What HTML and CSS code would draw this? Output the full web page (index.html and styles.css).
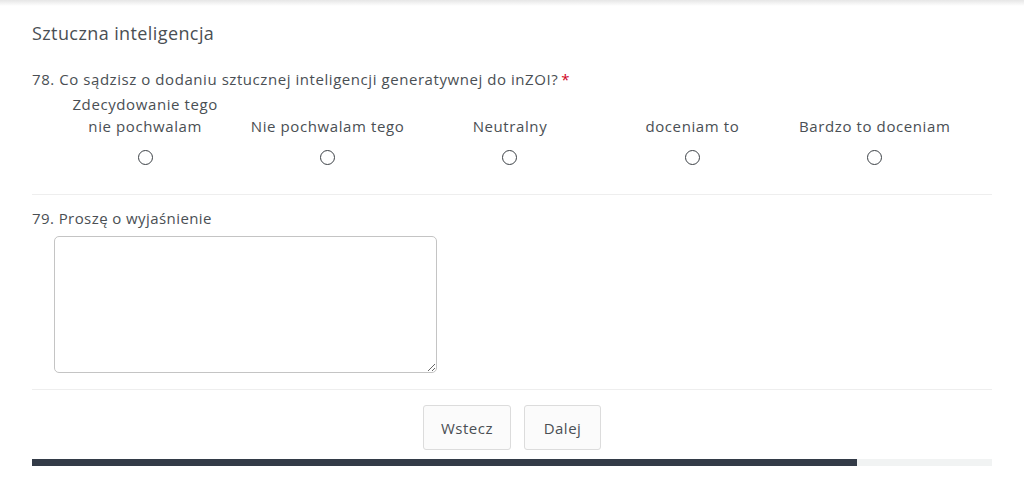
FILE: index.html
```html
<!DOCTYPE html>
<html lang="pl">
<head>
<meta charset="utf-8">
<link rel="stylesheet" href="styles.css">
</head>
<body>
<div class="topshade"></div>
<div class="page">
  <h2 class="section-title">Sztuczna inteligencja</h2>
  <div class="question q78">
    <div class="q-title q78-title">78. Co sądzisz o dodaniu sztucznej inteligencji generatywnej do inZOI?<span class="req">*</span></div>
    <div class="scale">
      <label class="opt"><span class="opt-label">Zdecydowanie tego<br>nie pochwalam</span><span class="radio"></span></label>
      <label class="opt"><span class="opt-label">Nie pochwalam tego</span><span class="radio"></span></label>
      <label class="opt"><span class="opt-label">Neutralny</span><span class="radio"></span></label>
      <label class="opt"><span class="opt-label">doceniam to</span><span class="radio"></span></label>
      <label class="opt"><span class="opt-label">Bardzo to doceniam</span><span class="radio"></span></label>
    </div>
  </div>
  <div class="question q79">
    <div class="q-title">79. Proszę o wyjaśnienie</div>
    <textarea class="answer"></textarea>
  </div>
  <div class="nav">
    <button class="btn btn-back">Wstecz</button>
    <button class="btn btn-next">Dalej</button>
  </div>
  <div class="progress"><div class="progress-fill" style="width: 85.9%"></div></div>
</div>
</body>
</html>
```
FILE: styles.css
```css
html, body {
  margin: 0;
  padding: 0;
  background: #ffffff;
}
body {
  font-family: "Open Sans", "DejaVu Sans", sans-serif;
  color: #4a4f54;
  width: 1024px;
  height: 485px;
  overflow: hidden;
}
.topshade {
  height: 6px;
  background: linear-gradient(#e6e6e6, #ffffff);
}
.page {
  margin: 0 32px;
}
.section-title {
  margin: 14px 0 0;
  font-size: 18px;
  font-weight: 400;
  line-height: 26px;
  letter-spacing: 0.4px;
  color: #4a4f54;
}
.question {
  border-bottom: 1px solid #eeeeee;
}
.q78 {
  margin-top: 23px;
  padding-bottom: 29px;
}
.q-title {
  font-size: 15px;
  line-height: 20px;
  letter-spacing: 0.42px;
}
.q78-title {
  letter-spacing: 0.56px;
}
.req {
  color: #d0021b;
  margin-left: 3px;
}
.scale {
  display: grid;
  grid-template-columns: repeat(5, 182.4px);
  margin-left: 22px;
  margin-top: 4px;
}
.opt {
  display: flex;
  flex-direction: column;
  align-items: center;
  justify-content: flex-end;
  text-align: center;
  font-size: 15px;
  line-height: 22px;
  letter-spacing: 0.6px;
}
.radio {
  display: block;
  width: 13px;
  height: 13px;
  border: 1.5px solid #3c4146;
  border-radius: 50%;
  margin-top: 13px;
}
.q79 {
  padding-top: 13px;
  padding-bottom: 16px;
}
.answer {
  display: block;
  box-sizing: border-box;
  width: 383px;
  height: 137px;
  margin: 8px 0 0 22px;
  border: 1px solid #c4c4c4;
  border-radius: 5px;
  resize: vertical;
  font-family: inherit;
}
.nav {
  display: flex;
  justify-content: center;
  gap: 13px;
  padding-top: 15px;
  padding-bottom: 9px;
}
.btn {
  height: 45px;
  padding: 0 16px;
  background: #fbfbfb;
  border: 1px solid #dcdcdc;
  border-radius: 3px;
  font-family: inherit;
  font-size: 15px;
  letter-spacing: 0.5px;
  color: #4a4f54;
}
.btn-back { width: 88px; }
.btn-next { width: 77px; }
.progress {
  height: 7px;
  background: #f1f3f3;
}
.progress-fill {
  height: 100%;
  background: #333b47;
}
```
